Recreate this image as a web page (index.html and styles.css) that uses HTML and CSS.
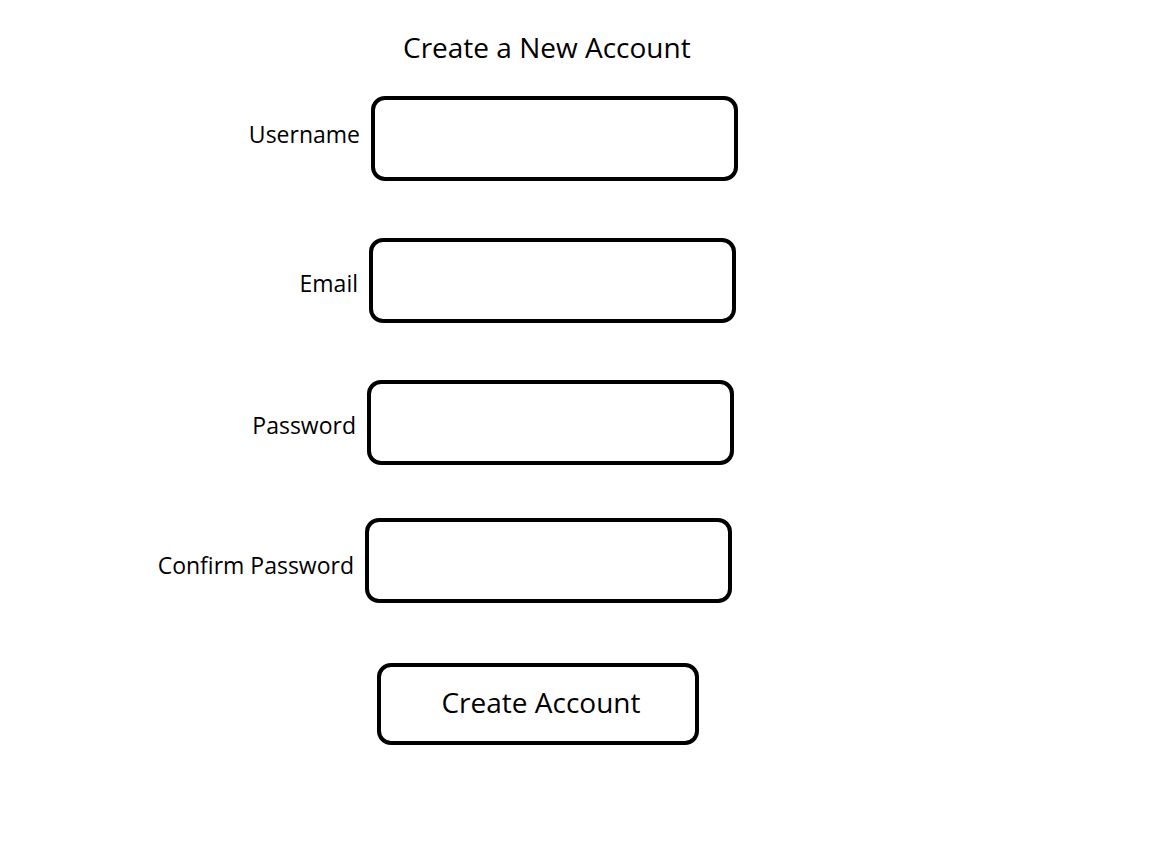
FILE: index.html
```html
<!DOCTYPE html>
<html lang="en">
<head>
  <meta charset="UTF-8">
  <meta name="viewport" content="width=device-width, initial-scale=1.0">
  <title>Create a New Account</title>
  <link rel="stylesheet" href="styles.css">
</head>
<body>
  <div class="signup">
    <h1 class="signup-title">Create a New Account</h1>
    <form class="signup-form" onsubmit="return false">
      <div class="field field-1">
        <label for="username">Username</label>
        <input id="username" type="text">
      </div>
      <div class="field field-2">
        <label for="email">Email</label>
        <input id="email" type="email">
      </div>
      <div class="field field-3">
        <label for="password">Password</label>
        <input id="password" type="password">
      </div>
      <div class="field field-4">
        <label for="confirm">Confirm Password</label>
        <input id="confirm" type="password">
      </div>
      <button class="submit-button" type="submit">Create Account</button>
    </form>
  </div>
</body>
</html>
```

FILE: styles.css
```css
body {
  margin: 0;
  background: #fff;
  color: #000;
  font-family: "Open Sans", "Noto Sans", sans-serif;
}
.signup-title {
  margin: 31px 0 0 403px;
  font-size: 28px;
  font-weight: 400;
  line-height: 32px;
}
.signup-form {
  display: flex;
  flex-direction: column;
  align-items: flex-start;
  gap: 57px;
  margin-top: 33px;
}
.field {
  display: flex;
  align-items: center;
  gap: 11px;
}
.field label {
  width: 354px;
  text-align: right;
  font-size: 23px;
  margin-top: -10px;
}
.field input {
  box-sizing: border-box;
  width: 367px;
  height: 85px;
  border: 4px solid #000;
  border-radius: 14px;
  background: #fff;
  font: inherit;
}
.field-1 { margin-left: 6px; }
.field-2 { margin-left: 4px; }
.field-3 { margin-left: 2px; }
.field-4 { margin-top: -4px; }
.field-2 label,
.field-3 label { margin-top: 4px; }
.field-4 label { margin-top: 8px; }
.submit-button {
  box-sizing: border-box;
  width: 322px;
  height: 82px;
  margin: 3px 0 0 377px;
  padding: 0 0 4px 6px;
  border: 4px solid #000;
  border-radius: 14px;
  background: #fff;
  color: #000;
  font-family: inherit;
  font-size: 28px;
}
```
